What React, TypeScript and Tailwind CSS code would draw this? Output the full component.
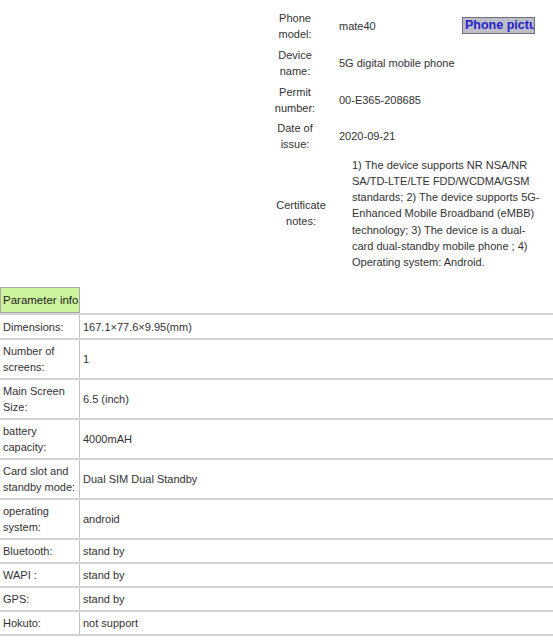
const topRows = [
  { label: ['Phone', 'model:'], value: 'mate40' },
  { label: ['Device', 'name:'], value: '5G digital mobile phone' },
  { label: ['Permit', 'number:'], value: '00-E365-208685' },
  { label: ['Date of', 'issue:'], value: '2020-09-21' },
]

// wrapped the same way the source page wraps it
const notes = [
  '1) The device supports NR NSA/NR',
  'SA/TD-LTE/LTE FDD/WCDMA/GSM',
  'standards; 2) The device supports 5G-',
  'Enhanced Mobile Broadband (eMBB)',
  'technology; 3) The device is a dual-',
  'card dual-standby mobile phone ; 4)',
  'Operating system: Android.',
]

const params = [
  { label: 'Dimensions:', value: '167.1×77.6×9.95(mm)' },
  { label: 'Number of screens:', value: '1', tall: true },
  { label: 'Main Screen Size:', value: '6.5 (inch)', tall: true },
  { label: 'battery capacity:', value: '4000mAH', tall: true },
  { label: 'Card slot and standby mode:', value: 'Dual SIM Dual Standby', tall: true },
  { label: 'operating system:', value: 'android', tall: true },
  { label: 'Bluetooth:', value: 'stand by' },
  { label: 'WAPI :', value: 'stand by' },
  { label: 'GPS:', value: 'stand by' },
  { label: 'Hokuto:', value: 'not support' },
]

export default function App() {
  return (
    <div
      className="min-h-[640px] w-[553px] overflow-hidden bg-white text-[11px] leading-[16px] text-[#333]"
      style={{ fontFamily: '"Liberation Sans", Arial, sans-serif' }}
    >
      {/* certificate block */}
      <div className="pl-[268px] pt-[8px]">
        <div className="flex">
          <div className="flex w-[194px] shrink-0 flex-col">
            {topRows.map((r) => (
              <div key={r.value} className="flex h-[36.7px] items-center">
                <div className="w-[54px] shrink-0 text-center">
                  {r.label[0]}
                  <br />
                  {r.label[1]}
                </div>
                <div className="whitespace-nowrap pl-[17px]">{r.value}</div>
              </div>
            ))}
          </div>
          <div className="pt-[9px]">
            <button className="h-[17px] w-[73px] overflow-hidden whitespace-nowrap border border-[#6f6f78] bg-[#bdbdc8] pl-[2px] text-left text-[12.5px] leading-[15px] font-bold text-[#2323c8]">
              Phone picture
            </button>
          </div>
        </div>
        <div className="flex items-center pt-[2px]">
          <div className="w-[66px] shrink-0 text-center">
            Certificate
            <br />
            notes:
          </div>
          <div className="pl-[18px] leading-[16.2px]">
            {notes.map((line) => (
              <div key={line} className="whitespace-nowrap">
                {line}
              </div>
            ))}
          </div>
        </div>
      </div>

      {/* parameter table */}
      <div className="mt-[17px]">
        <div className="flex h-[26px] w-[80px] items-center overflow-hidden whitespace-nowrap border border-[#a8a8a8] bg-[#ccf39c] pl-[2px] text-[11.5px] text-[#222]">
          Parameter info
        </div>
        <div className="border-t-2 border-[#d2d2d2]">
          {params.map((p, i) => (
            <div
              key={p.label}
              className={`flex border-b-2 border-[#d2d2d2] ${p.tall ? 'h-[40px]' : i === 0 ? 'h-[25px]' : 'h-[24px]'}`}
            >
              <div className="flex w-[80px] shrink-0 items-center border-r border-[#c4c4c4] pl-[3px] pr-[2px]">
                {p.label}
              </div>
              <div className="flex items-center pl-[3px]">{p.value}</div>
            </div>
          ))}
        </div>
      </div>
    </div>
  )
}
